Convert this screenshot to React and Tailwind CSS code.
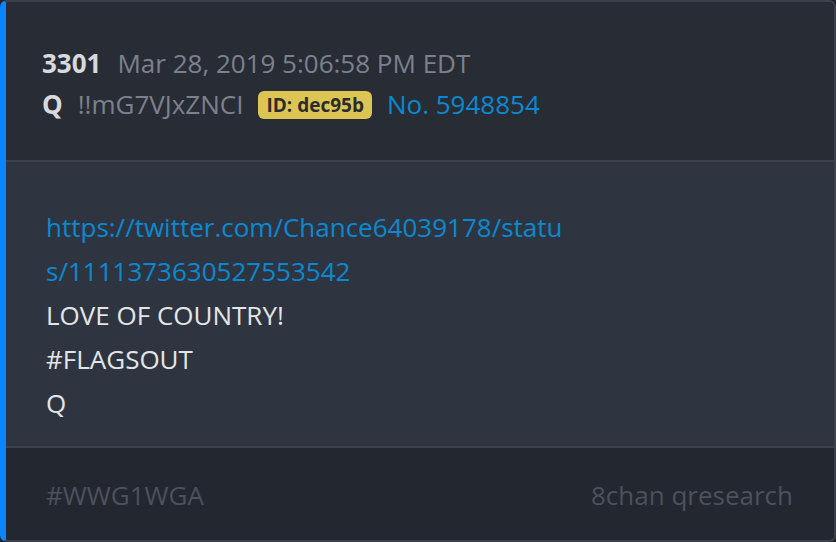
export default function App() {
  const font = { fontFamily: '"Open Sans", "Noto Sans", sans-serif' }

  return (
    <div className="w-[836px] h-[542px] bg-[#1f2229]" style={font}>
      <div className="w-full h-full flex flex-col rounded-[7px] overflow-hidden border-2 border-[#3c414c] border-l-[6px] border-l-[#0a84ff]">
        <div className="h-[160px] shrink-0 bg-[#282c35] pl-[36px] pt-[41px] border-b-2 border-[#3c414c]">
          <div className="flex items-baseline gap-[16px] text-[26px] leading-[40px]">
            <span className="font-bold text-[#d8d9dc]">3301</span>
            <span className="text-[#7c818d]">Mar 28, 2019 5:06:58 PM EDT</span>
          </div>
          <div className="flex items-center gap-[15px] text-[26px] leading-[43px]">
            <span className="font-bold text-[#d8d9dc]">Q</span>
            <span className="text-[#7c818d]">!!mG7VJxZNCI</span>
            <span className="h-[28px] px-[8px] rounded-[6px] bg-[#dcc552] text-[#2b2c2e] text-[19px] font-bold leading-[28px]">
              ID: dec95b
            </span>
            <span className="text-[#0a89d1]">No. 5948854</span>
          </div>
        </div>

        <div className="flex-1 bg-[#2f3540] pl-[40px] pt-[43px] text-[26px] leading-[44px] text-[#e4e5e7] border-b-2 border-[#3c414c]">
          <div className="text-[#0a89d1]">https://twitter.com/Chance64039178/statu</div>
          <div className="text-[#0a89d1]">s/1111373630527553542</div>
          <div>LOVE OF COUNTRY!</div>
          <div>#FLAGSOUT</div>
          <div>Q</div>
        </div>

        <div className="h-[92px] shrink-0 bg-[#23272f] flex items-center justify-between pl-[40px] pr-[41px] pt-[3px] text-[26px] text-[#4c515c]">
          <span>#WWG1WGA</span>
          <span>8chan qresearch</span>
        </div>
      </div>
    </div>
  )
}
